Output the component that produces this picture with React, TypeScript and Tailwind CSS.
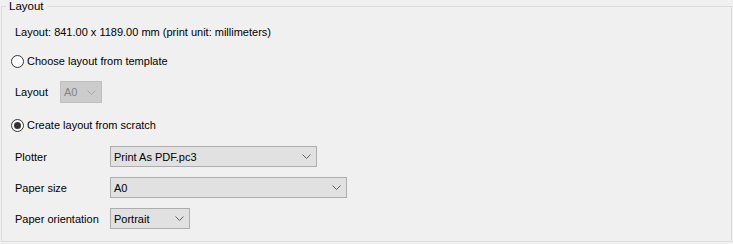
import { ReactNode } from "react";

function Chevron({ color }: { color: string }) {
  return (
    <svg width="9" height="5" viewBox="0 0 9 5" className="shrink-0">
      <path d="M0.5 0.5 L4.5 4.5 L8.5 0.5" fill="none" stroke={color} strokeWidth="1" />
    </svg>
  );
}

function Combo({ value, width, disabled }: { value: string; width: string; disabled?: boolean }) {
  return (
    <div
      className={`flex items-center justify-between border pl-[3px] pr-[5px] ${width} ${
        disabled
          ? "h-[22px] border-[#bfbfbf] bg-[#cccccc] text-[#838383]"
          : "h-[21px] border-[#adadad] bg-[#e1e1e1] text-black"
      }`}
    >
      <span>{value}</span>
      <Chevron color={disabled ? "#a8a8a8" : "#606060"} />
    </div>
  );
}

function Radio({ checked, children }: { checked?: boolean; children: ReactNode }) {
  return (
    <div className="flex h-[16px] items-center pl-[9px]">
      <span className="flex h-[13px] w-[13px] items-center justify-center rounded-full border border-[#333333] bg-white">
        {checked && <span className="h-[7px] w-[7px] rounded-full bg-[#333333]" />}
      </span>
      <span className="ml-[3px]">{children}</span>
    </div>
  );
}

function Row({ label, children }: { label: string; children: ReactNode }) {
  return (
    <div className="flex items-center pl-[13px]">
      <span className="w-[95px]">{label}</span>
      {children}
    </div>
  );
}

export default function App() {
  return (
    <div className="h-[244px] w-[733px] bg-[#f0f0f0] text-[11px] leading-[16px] text-black [font-family:'Liberation_Sans',Arial,sans-serif]">
      <fieldset className="mx-[1px] h-[242px] border border-[#dcdcdc]">
        <legend className="ml-[4px] px-[3px] text-[11.5px] leading-[13px]">Layout</legend>
        <div className="flex flex-col pt-[11px]">
          <div className="pl-[13px]">Layout: 841.00 x 1189.00 mm (print unit: millimeters)</div>
          <div className="mt-[13px]">
            <Radio>Choose layout from template</Radio>
          </div>
          <div className="mt-[12px] flex items-center pl-[13px]">
            <span className="w-[45px]">Layout</span>
            <Combo value="A0" width="w-[42px]" disabled />
          </div>
          <div className="mt-[14px]">
            <Radio checked>Create layout from scratch</Radio>
          </div>
          <div className="mt-[13px] flex flex-col gap-[10px]">
            <Row label="Plotter">
              <Combo value="Print As PDF.pc3" width="w-[207px]" />
            </Row>
            <Row label="Paper size">
              <Combo value="A0" width="w-[237px]" />
            </Row>
            <Row label="Paper orientation">
              <Combo value="Portrait" width="w-[80px]" />
            </Row>
          </div>
        </div>
      </fieldset>
    </div>
  );
}
